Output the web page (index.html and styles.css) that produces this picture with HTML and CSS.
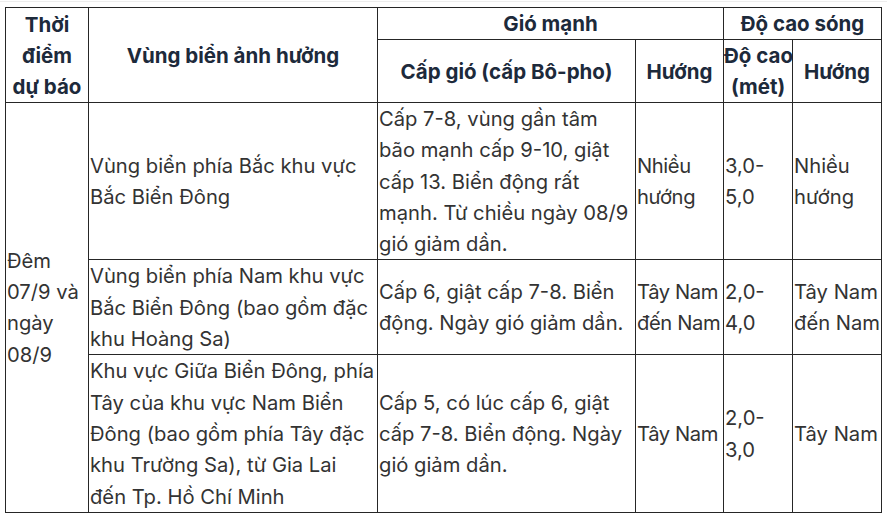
FILE: index.html
```html
<!DOCTYPE html>
<html lang="vi">
<head>
<meta charset="utf-8">
<title>Dự báo gió mạnh và sóng lớn</title>
<link rel="stylesheet" href="styles.css">
</head>
<body>
<div class="page">
  <table class="forecast">
    <colgroup>
      <col class="w-time">
      <col class="w-area">
      <col class="w-level">
      <col class="w-dir">
      <col class="w-height">
      <col class="w-wdir">
    </colgroup>
    <thead>
      <tr>
        <th rowspan="2">Thời điểm dự&nbsp;báo</th>
        <th rowspan="2">Vùng biển ảnh hưởng</th>
        <th colspan="2">Gió mạnh</th>
        <th colspan="2">Độ cao sóng</th>
      </tr>
      <tr>
        <th>Cấp gió (cấp Bô-pho)</th>
        <th>Hướng</th>
        <th>Độ&nbsp;cao (mét)</th>
        <th>Hướng</th>
      </tr>
    </thead>
    <tbody>
      <tr>
        <td rowspan="3">Đêm 07/9 và ngày 08/9</td>
        <td>Vùng biển phía Bắc khu vực Bắc Biển Đông</td>
        <td>Cấp 7-8, vùng gần tâm bão mạnh cấp 9-10, giật cấp 13. Biển động rất mạnh. Từ chiều ngày 08/9 gió giảm dần.</td>
        <td class="dir">Nhiều hướng</td>
        <td>3,0-5,0</td>
        <td>Nhiều hướng</td>
      </tr>
      <tr>
        <td>Vùng biển phía Nam khu vực Bắc Biển Đông (bao gồm đặc khu Hoàng Sa)</td>
        <td>Cấp 6, giật cấp 7-8. Biển động. Ngày gió giảm dần.</td>
        <td class="dir">Tây Nam đến Nam</td>
        <td>2,0-4,0</td>
        <td>Tây Nam đến Nam</td>
      </tr>
      <tr>
        <td>Khu vực Giữa Biển Đông, phía Tây của khu vực Nam Biển Đông (bao gồm phía Tây đặc khu Trường Sa), từ Gia Lai đến&nbsp;Tp. Hồ Chí Minh</td>
        <td>Cấp 5, có lúc cấp 6, giật cấp 7-8. Biển động. Ngày gió giảm dần.</td>
        <td class="dir">Tây Nam</td>
        <td>2,0-3,0</td>
        <td>Tây Nam</td>
      </tr>
    </tbody>
  </table>
</div>
</body>
</html>
```
FILE: styles.css
```css
html, body {
  margin: 0;
  padding: 0;
  background: #ffffff;
}

.page {
  margin-top: 1px;
  border-top: 1px solid #ededed;
  padding: 5px 0 0 5px;
}

.forecast {
  border-collapse: collapse;
  table-layout: fixed;
  width: 877px;
  font-family: "Inter", "Noto Sans", sans-serif;
  font-size: 20.2px;
  line-height: 31px;
  color: #333333;
}

.w-time { width: 83px; }
.w-area { width: 289px; }
.w-level { width: 258px; }
.w-dir { width: 88px; }
.w-height { width: 69px; }
.w-wdir { width: 89px; }

.forecast th,
.forecast td {
  border: 1px solid #262626;
  vertical-align: middle;
}

.forecast th {
  padding: 0;
  font-size: 20.5px;
  font-weight: 700;
  color: #1d2a3b;
  text-align: center;
}

.forecast td {
  padding: 0 0 0 1px;
  line-height: 31.3px;
  text-align: left;
}

.forecast td.dir {
  letter-spacing: -0.4px;
}
```
